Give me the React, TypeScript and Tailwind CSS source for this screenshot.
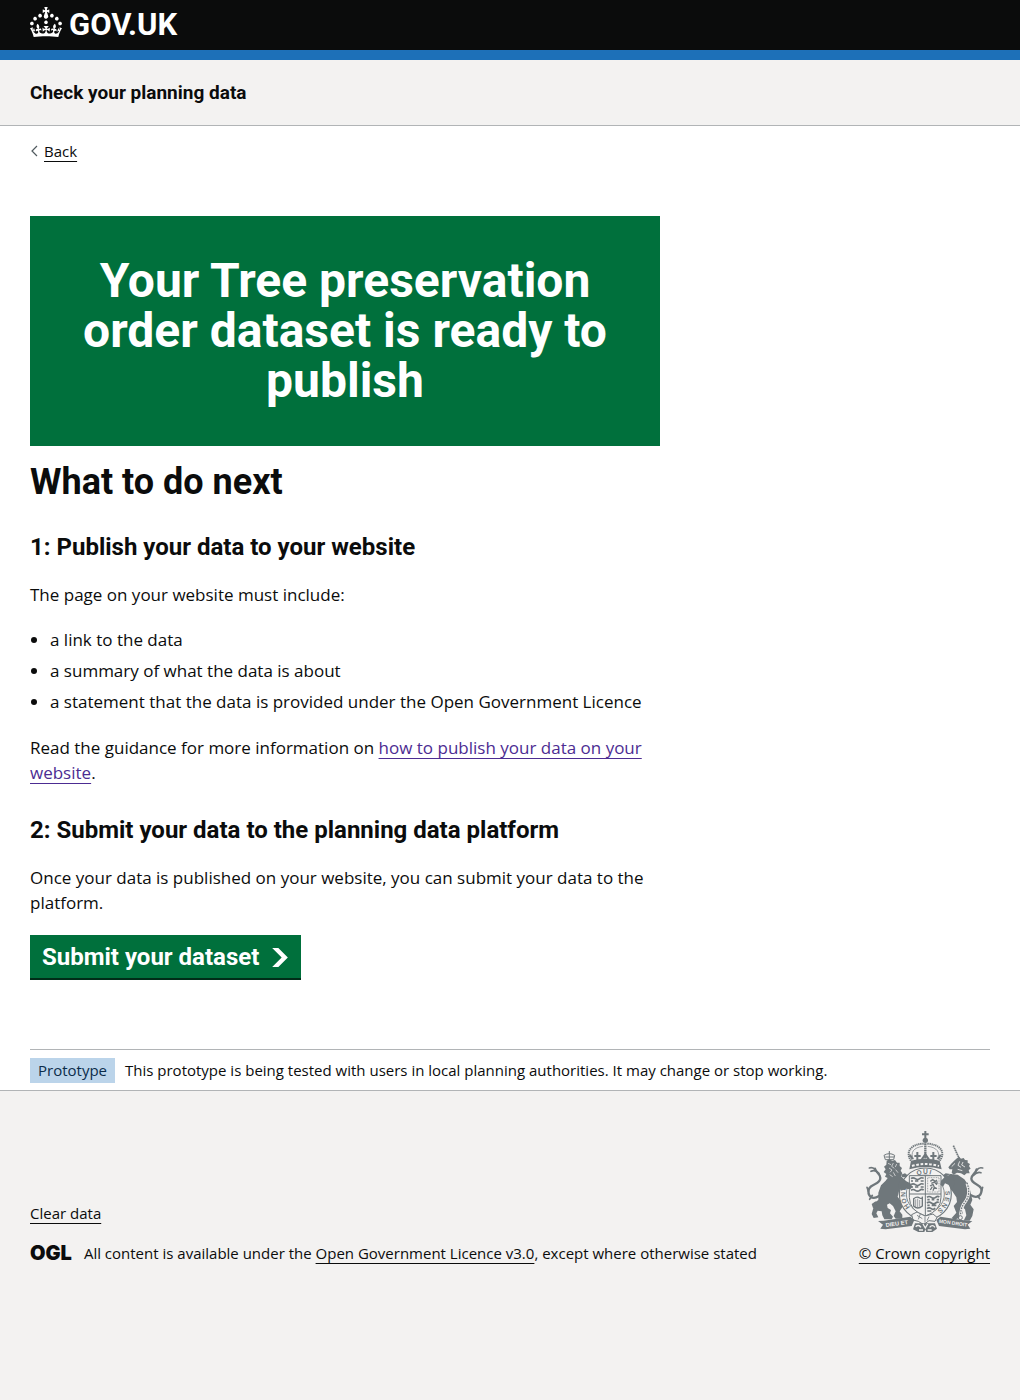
import React from 'react';

const link =
  'underline decoration-1 underline-offset-[4px] hover:decoration-[3px] focus:bg-[#ffdd00] focus:outline-none';

function CrownLogo() {
  return (
    <svg viewBox="0 0 32 30" className="h-[30px] w-8 shrink-0" fill="currentColor" aria-hidden="true">
      <path d="M22.6 10.4c-1 .4-2-.1-2.4-1-.4-.9.1-2 1-2.4.9-.4 2 .1 2.4 1s-.1 2-1 2.4m-5.9 6.7c-.9.4-2-.1-2.4-1-.4-.9.1-2 1-2.4.9-.4 2 .1 2.4 1s-.1 2-1 2.4m10.8-3.7c-1 .4-2-.1-2.4-1-.4-.9.1-2 1-2.4.9-.4 2 .1 2.4 1s0 2-1 2.4m3.3 4.8c-1 .4-2-.1-2.4-1-.4-.9.1-2 1-2.4.9-.4 2 .1 2.4 1s-.1 2-1 2.4M17 4.7l2.3 1.2V2.5l-2.3.7-.2-.2.9-3h-3.4l.9 3-.2.2c-.1.1-2.3-.7-2.3-.7v3.4L15 4.7c.1.1.1.2.2.2l-1.3 4c-.1.2-.1.4-.1.6 0 1.1.8 2 1.9 2.2h.7c1-.2 1.9-1.1 1.9-2.1 0-.2 0-.4-.1-.6l-1.3-4c-.1-.2 0-.2.1-.3m-7.6 5.7c.9.4 2-.1 2.4-1 .4-.9-.1-2-1-2.4-.9-.4-2 .1-2.4 1s0 2 1 2.4m-5 3c.9.4 2-.1 2.4-1 .4-.9-.1-2-1-2.4-.9-.4-2 .1-2.4 1s.1 2 1 2.4m-3.2 4.8c.9.4 2-.1 2.4-1 .4-.9-.1-2-1-2.4-.9-.4-2 .1-2.4 1s0 2 1 2.4m14.8 11c4.4 0 8.6.3 12.3.8 1.1-4.5 2.4-7 3.7-8.8l-2.5-.9c.2 1.3.3 1.9 0 2.7-.4-.4-.8-1.1-1.1-2.3l-1.2 4c.7-.5 1.3-.8 2-.9-1.1 2.5-2.6 3.1-3.5 3-1.1-.2-1.7-1.2-1.5-2.1.3-1.2 1.5-1.5 2.1-.1 1.1-2.3-.8-3-2-2.3 1.9-1.9 2.1-3.5.6-5.6-2.1 1.6-2.1 3.2-1.2 5.5-1.2-1.4-3.2-.6-2.5 1.6.9-1.4 2.1-.5 1.9.8-.2 1.1-1.7 2.1-3.5 1.9-2.7-.2-2.9-2.1-2.9-3.6.7-.1 1.9.5 2.9 1.9l.4-4.3c-1.1 1.1-2.1 1.4-3.2 1.4.4-1.2 2.1-3 2.1-3h-5.4s1.7 1.9 2.1 3c-1.1 0-2.1-.2-3.2-1.4l.4 4.3c1-1.4 2.2-2 2.9-1.9-.1 1.5-.2 3.4-2.9 3.6-1.9.2-3.4-.8-3.5-1.9-.2-1.3 1-2.2 1.9-.8.7-2.3-1.2-3-2.5-1.6.9-2.2.9-3.9-1.2-5.5-1.5 2-1.3 3.7.6 5.6-1.2-.7-3.1 0-2 2.3.6-1.4 1.8-1.1 2.1.1.2.9-.3 1.9-1.5 2.1-.9.2-2.4-.5-3.5-3 .6 0 1.2.3 2 .9l-1.2-4c-.3 1.1-.7 1.9-1.1 2.3-.3-.8-.2-1.4 0-2.7l-2.9.9C1.3 23 2.6 25.5 3.7 30c3.7-.5 7.9-.8 12.3-.8" />
    </svg>
  );
}

const garterLetters: [string, number][] = [
  ['H', -124],
  ['O', -108],
  ['N', -91],
  ['I', -78],
  ['Q', -16],
  ['U', 0],
  ['I', 13],
  ['S', 88],
  ['E', 104],
  ['N', 121],
  ['S', 138],
];

function CoatOfArms() {
  return (
    <svg viewBox="21 33 375 306" className="h-[102px] w-[125px]" fill="none" stroke="#6f777b" aria-hidden="true">
      {/* tails */}
      <g strokeWidth="7" strokeLinecap="round" strokeLinejoin="round">
        <path d="M72 228C50 242 36 226 42 206C50 190 76 194 76 174C76 160 62 158 60 146" />
        <path d="M43 144Q52 141 60 148M48 154Q60 148 72 160M40 214L36 202M52 226L44 238" strokeWidth="5" />
        <path d="M348 226C368 238 382 224 379 206C374 192 350 192 349 176C349 164 362 162 365 148" />
        <path d="M383 144Q371 141 366 150M378 158Q366 154 356 166M380 212L383 202M368 228L374 236" strokeWidth="5" />
      </g>

      {/* lion */}
      <g fill="#6f777b" stroke="none">
        <path d="M95 122L103 118L112 122L120 120L126 128L134 128L134 138L141 144L137 152L142 160L138 168L143 176L152 186L140 204L132 214L128 230L138 244L142 262L134 274L142 284L142 296L122 296L116 288L122 274L114 258L104 250L96 254L98 264L108 270L105 280L114 290L110 298L88 298L82 286L80 274L68 272L64 280L70 292L56 294L50 282L55 264L56 250L70 240L70 218L78 196L92 182L98 174L90 170L94 162L86 156L92 148L87 140L94 134Z" />
        <path d="M62 244L50 252L54 264L68 262Z" />
      </g>
      <path d="M91 119L87 106Q103 96 119 106L116 119ZM103 98V119M91 111H117M103 99V93" strokeWidth="3" />
      <path
        d="M99 130L108 134M115 129L110 139L118 145M125 132L121 141M102 144L111 150L105 157M122 149L129 158M115 157L121 168M104 164L113 170"
        stroke="#f3f2f1"
        strokeWidth="2"
      />

      {/* unicorn */}
      <g fill="#6f777b" stroke="none">
        <path d="M312 110L318 116L326 114L330 120L338 121L338 128L345 132L342 138L347 146L341 150L344 160L335 160L328 166L318 160L306 158L296 164L290 158L292 148L284 148L280 142L288 132L296 124L304 116Z" />
        <path d="M284 162L308 164L328 178L342 198L348 222L352 240L346 254L356 268L352 288L344 302L326 302L334 286L330 268L318 258L324 278L316 292L298 300L290 294L304 278L296 258L306 246L304 232L292 214L276 196Z" />
      </g>
      <path d="M295 77L313 116" strokeWidth="5" strokeDasharray="5 1.5" />
      <path
        d="M300 130L290 140M314 124L309 136L318 142M324 126L320 135L330 141M308 148L322 152"
        stroke="#f3f2f1"
        strokeWidth="2.5"
      />
      <path d="M336 190Q348 222 332 244Q316 262 317 294" stroke="#f3f2f1" strokeWidth="9" />
      <path d="M336 188Q348 222 332 244Q316 262 317 286" strokeWidth="4" strokeDasharray="5 3" />
      <circle cx="316" cy="293" r="6" strokeWidth="3" />

      {/* garter */}
      <circle cx="211" cy="222" r="78" fill="#f3f2f1" strokeWidth="3.5" />
      <circle cx="211" cy="222" r="57" strokeWidth="2.5" />
      <g
        fill="#6f777b"
        stroke="none"
        fontFamily="Liberation Sans, Arial, sans-serif"
        fontWeight="700"
        fontSize="20"
        textAnchor="middle"
      >
        {garterLetters.map(([letter, angle]) => (
          <text key={angle} transform={`rotate(${angle} 211 222)`} x="211" y="162">
            {letter}
          </text>
        ))}
      </g>

      {/* shield */}
      <path d="M163 167H258V232Q258 272 211 288Q163 272 163 232Z" fill="#f3f2f1" strokeWidth="3" />
      <path d="M211 167V288M163 222H258" strokeWidth="3" />
      <path
        d="M168 176Q174 171 181 176T194 176T206 175M168 183H174M180 183H190M197 183H206M168 194Q174 189 181 194T194 194T206 193M168 201H174M180 201H190M197 201H206M168 211Q174 206 181 211T194 211T206 210"
        strokeWidth="5"
      />
      <path
        d="M216 232Q222 227 229 232T242 232T253 231M217 239H224M230 239H238M245 239H252M216 249Q222 244 229 249T242 249T251 248M217 256H224M230 256H244M216 266Q222 261 229 266T240 264M217 273H229"
        strokeWidth="5"
      />
      <rect x="218" y="173" width="34" height="43" strokeWidth="2" strokeDasharray="3 2" />
      <path
        d="M226 184L233 179L241 184L246 180M229 190L238 186L246 194M225 198L234 193L238 202L246 206M232 200L226 210M238 202L234 212M246 184V192"
        strokeWidth="4"
      />
      <path d="M176 236Q186 228 194 234Q203 238 202 230V258Q188 270 176 258Z" strokeWidth="4" />
      <path d="M182 238V260M188 236V262M194 240V260" strokeWidth="2" />

      {/* forelegs resting on the shield */}
      <g fill="#6f777b" stroke="none">
        <path d="M136 168L154 184L166 190L172 200L166 208L154 206L138 212L130 200ZM138 164L150 160L158 166L154 172L142 172Z" />
        <path d="M290 162L270 170L258 182L256 194L264 200L270 190L280 194L292 210L300 190ZM286 162L272 160L264 166L268 172Z" />
      </g>

      {/* crown */}
      <path d="M168 122L163 148Q211 134 260 148L254 122Q211 110 168 122Z" fill="#6f777b" stroke="none" />
      <path d="M171 138Q211 126 252 138" stroke="#f3f2f1" strokeWidth="6" strokeDasharray="8 5" />
      <g strokeWidth="4">
        <path d="M168 122C150 96 168 72 206 71M254 122C274 96 254 72 216 71" strokeWidth="6" strokeDasharray="4 2" />
        <path d="M176 118C164 98 176 82 204 79M246 118C258 98 246 82 218 79" strokeWidth="2" />
        <path d="M211 70V122" strokeWidth="7" strokeDasharray="5 1.5" />
        <path
          d="M187 96V120M178 108H197M235 96V120M226 108H245M165 104L173 118M257 104L249 118M200 119L211 103L222 119"
          strokeWidth="6"
        />
      </g>
      <circle cx="211" cy="61" r="8" fill="#6f777b" stroke="none" />
      <path d="M211 33V54M201 43H221" strokeWidth="6" />

      {/* buckle and compartment */}
      <path
        d="M170 284L186 276L210 288L234 282L246 292L240 304L222 302L206 314L190 304L174 300Z"
        fill="#f3f2f1"
        strokeWidth="3"
      />
      <path d="M186 286L202 296M196 282L190 298M210 290V308M222 290L216 302" strokeWidth="2.5" />
      <path d="M180 310H240L246 326L232 336H214L211 328L208 336H190L174 328Z" fill="#6f777b" stroke="none" />
      <path
        d="M182 320Q190 312 198 322M224 322Q232 312 240 322M204 312L211 324L218 312M192 330H204M218 330H230"
        stroke="#f3f2f1"
        strokeWidth="4"
      />

      {/* motto ribbons */}
      <g fill="#6f777b" stroke="none">
        <path d="M69 303L86 302L166 290L178 300L170 318L92 328L76 326L84 314Z" />
        <path d="M352 303L336 302L256 290L244 300L252 318L330 328L346 326L338 314Z" />
      </g>
      <g fill="#f3f2f1" stroke="none" fontFamily="Liberation Sans, Arial, sans-serif" fontWeight="700">
        <text transform="translate(93 321) rotate(-8)" fontSize="17">
          DIEU ET
        </text>
        <text transform="translate(251 308) rotate(8)" fontSize="15">
          MON DROIT
        </text>
      </g>
    </svg>
  );
}

export default function App() {
  return (
    <div className="flex min-h-screen flex-col bg-[#f3f2f1] font-['Open_Sans',sans-serif] text-[17px] leading-[25px] text-[#0b0c0c]">
      <header className="border-b-10 border-[#1d70b8] bg-[#0b0c0c] px-[30px] text-white">
        <div className="mx-auto flex h-[50px] max-w-[960px] items-center">
          <a href="#" className="flex items-center gap-[7px] pb-[6px]" aria-label="GOV.UK">
            <CrownLogo />
            <span className="h-[30px] font-[Roboto,sans-serif] text-[31px] leading-[36px] font-bold">GOV.UK</span>
          </a>
        </div>
      </header>

      <section className="border-b border-[#b1b4b6] px-[30px] py-5" aria-label="Service information">
        <div className="mx-auto max-w-[960px]">
          <a href="#" className="font-[Roboto,sans-serif] text-[19px] font-bold">
            Check your planning data
          </a>
        </div>
      </section>

      <div className="bg-white px-[30px]">
        <div className="mx-auto max-w-[960px]">
          <a href="#" className="mt-[15px] inline-flex items-center text-[15px] leading-5">
            <svg viewBox="0 0 8 12" className="mr-[6px] h-3 w-2" fill="none" stroke="#505a5f" aria-hidden="true">
              <path d="M7 1L2 6l5 5" strokeWidth="1.2" />
            </svg>
            <span className={link}>Back</span>
          </a>

          <main className="pt-[53px] pb-[71px]">
            <div className="-mx-[15px]">
              <div className="px-[15px] md:w-2/3">
                <div className="bg-[#00703c] p-10 text-center font-[Roboto,sans-serif] text-white">
                  <h1 className="text-5xl leading-[50px] font-bold">Your Tree preservation order dataset is ready to publish</h1>
                </div>

                <h2 className="mt-4 font-[Roboto,sans-serif] text-4xl leading-10 font-bold">What to do next</h2>

                <h3 className="mt-[30px] mb-5 font-[Roboto,sans-serif] text-2xl leading-[30px] font-bold">
                  1: Publish your data to your website
                </h3>
                <p className="mb-5">The page on your website must include:</p>
                <ul className="mb-5 flex list-disc flex-col gap-[5px] pl-5 leading-[26px]">
                  <li>a link to the data</li>
                  <li>a summary of what the data is about</li>
                  <li>a statement that the data is provided under the Open Government Licence</li>
                </ul>
                <p>
                  Read the guidance for more information on{' '}
                  <a href="#" className={`${link} text-[#4c2c92]`}>
                    how to publish your data on your website
                  </a>
                  .
                </p>

                <h3 className="mt-[30px] mb-5 font-[Roboto,sans-serif] text-2xl leading-[30px] font-bold">
                  2: Submit your data to the planning data platform
                </h3>
                <p className="mb-5">Once your data is published on your website, you can submit your data to the platform.</p>

                <button
                  type="button"
                  className="flex items-center gap-3 bg-[#00703c] px-3 pt-[9px] pb-2 font-[Roboto,sans-serif] text-2xl leading-[26px] font-bold text-white shadow-[0_2px_0_#002d18]"
                >
                  Submit your dataset
                  <svg viewBox="0 0 33 40" className="h-[19px] w-[18px]" fill="currentColor" aria-hidden="true">
                    <path d="M0 0h13l20 20-20 20H0l20-20z" />
                  </svg>
                </button>
              </div>
            </div>
          </main>

          <div className="flex items-center gap-[10px] border-t border-[#b1b4b6] pt-2 pb-[7px] text-[15px]">
            <strong className="bg-[#bbd4ea] px-2 font-normal text-[#0c2d4a]">Prototype</strong>
            <span>This prototype is being tested with users in local planning authorities. It may change or stop working.</span>
          </div>
        </div>
      </div>

      <footer className="grow border-t border-[#b1b4b6] px-[30px] pt-10 text-[15px] leading-5">
        <div className="mx-auto flex max-w-[960px] flex-wrap items-end justify-between gap-x-[30px]">
          <div>
            <a href="#" className={link}>
              Clear data
            </a>
            <div className="mt-5 flex items-center gap-3">
              <span className="font-[Inter,sans-serif] text-xl leading-5 font-black">OGL</span>
              <span>
                All content is available under the{' '}
                <a href="#" className={link}>
                  Open Government Licence v3.0
                </a>
                , except where otherwise stated
              </span>
            </div>
          </div>
          <a href="#" className={`${link} flex flex-col items-center gap-[10px]`}>
            <CoatOfArms />
            © Crown copyright
          </a>
        </div>
      </footer>
    </div>
  );
}
